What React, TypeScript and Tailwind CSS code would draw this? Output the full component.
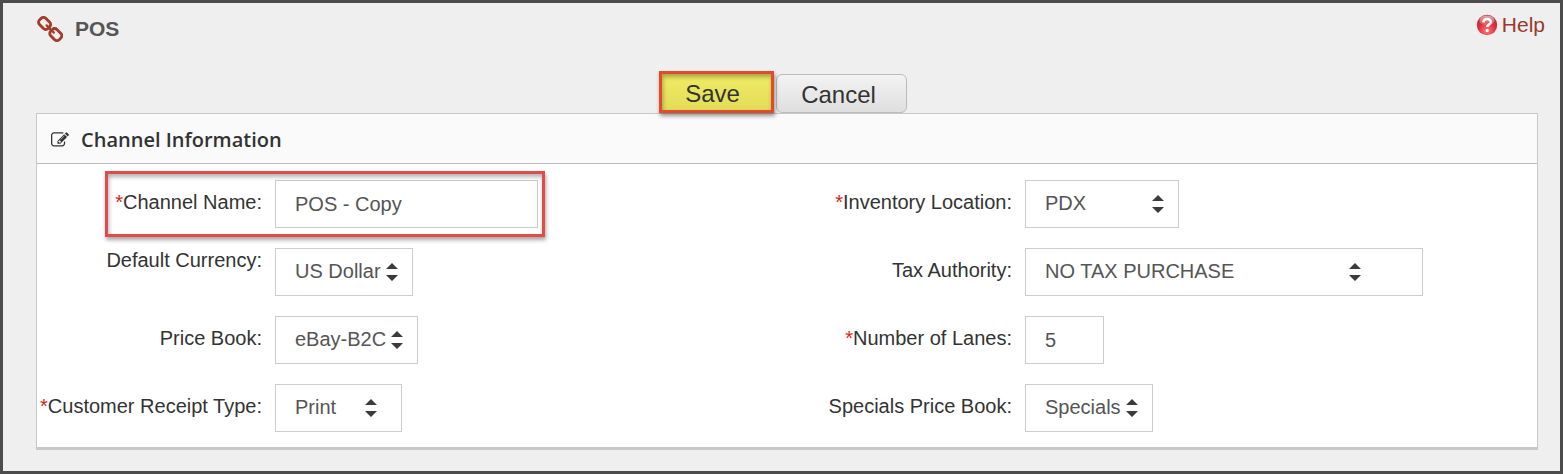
import type { ReactNode } from "react";

const ChainIcon = () => (
  <svg viewBox="0 0 26 26" className="size-[26px]" fill="none" stroke="#a63a2b" strokeWidth="2.9" aria-hidden="true">
    <rect x="-6" y="-4.4" width="12" height="8.8" rx="3.2" transform="translate(7.6 7.4) rotate(45)" />
    <rect x="-6" y="-4.4" width="12" height="8.8" rx="3.2" transform="translate(18.8 18.6) rotate(45)" />
    <path d="m9.6 9.4 7.2 7.2" strokeLinecap="round" strokeWidth="2.2" />
  </svg>
);

const HelpIcon = () => (
  <svg viewBox="0 0 22 22" className="size-[22px]" aria-hidden="true">
    <defs>
      <radialGradient id="ball" cx="0.5" cy="0.8" r="0.75">
        <stop offset="0" stopColor="#ff7b80" />
        <stop offset="0.55" stopColor="#e0303c" />
        <stop offset="1" stopColor="#b02a34" />
      </radialGradient>
      <linearGradient id="gloss" x1="0" y1="0" x2="0" y2="1">
        <stop offset="0" stopColor="#fff" stopOpacity="0.6" />
        <stop offset="1" stopColor="#fff" stopOpacity="0.1" />
      </linearGradient>
    </defs>
    <circle cx="11" cy="11" r="10.2" fill="url(#ball)" />
    <ellipse cx="11" cy="6.4" rx="7.6" ry="5" fill="url(#gloss)" />
    <path d="M7.4 8.4c.2-4.6 7.4-4.4 7.4-.4 0 2.6-3.6 2.4-3.6 5" fill="none" stroke="#fff" strokeWidth="2.6" />
    <circle cx="11.2" cy="16.4" r="1.6" fill="#fff" />
  </svg>
);

const EditIcon = () => (
  <svg viewBox="0 0 1792 1792" className="size-[18px]" fill="currentColor" aria-hidden="true">
    <path d="M888 1184l116-116-152-152-116 116v56h96v96h56zm440-720q-16-16-33 1l-350 350q-17 17-1 33t33-1l350-350q17-17 1-33zm80 594v190q0 119-84.5 203.5t-203.5 84.5h-832q-119 0-203.5-84.5t-84.5-203.5v-832q0-119 84.5-203.5t203.5-84.5h832q63 0 117 25 15 7 18 23 3 17-9 29l-49 49q-14 14-32 8-23-6-45-6h-832q-66 0-113 47t-47 113v832q0 66 47 113t113 47h832q66 0 113-47t47-113v-126q0-13 9-22l64-64q15-15 35-7t20 29zm-96-738l288 288-672 672h-288v-288zm444 132l-92 92-288-288 92-92q28-28 68-28t68 28l152 152q28 28 28 68t-28 68z" />
  </svg>
);

type FieldProps = {
  id: string;
  label: string;
  required?: boolean;
  labelClass?: string;
  children: ReactNode;
};

const Field = ({ id, label, required, labelClass = "self-center pb-1", children }: FieldProps) => (
  <div className="flex h-12 gap-[13px]">
    <label htmlFor={id} className={`w-[30%] whitespace-nowrap text-right leading-6 text-[#333] ${labelClass}`}>
      {required && <span className="text-[#e02020]">*</span>}
      {label}:
    </label>
    {children}
  </div>
);

type SelectProps = {
  id: string;
  value: string;
  width: string;
  arrow?: string;
};

const Select = ({ id, value, width, arrow = "right-[15px]" }: SelectProps) => (
  <div className={`relative h-12 ${width}`}>
    <select id={id} className="size-full appearance-none border border-[#ccc] bg-white pb-0.5 pl-[19px] text-[#555]">
      <option>{value}</option>
    </select>
    <svg viewBox="0 0 12 18" className={`pointer-events-none absolute top-[15px] h-[18px] w-3 ${arrow}`} fill="#3b3b3b" aria-hidden="true">
      <path d="M6 0l6 6H0zM6 18l6-6H0z" />
    </svg>
  </div>
);

const inputClass = "h-12 border border-[#ccc] bg-white pl-[19px] text-[#555]";

const App = () => {
  return (
    <div className="border-[3px] border-[#4d4c4d] bg-[#efefef] pb-[21px] pl-[33px] pr-[22px] font-['Liberation_Sans',Arial,sans-serif] text-xl">
      <header className="flex h-[68px] items-start justify-between">
        <h1 className="flex items-center gap-3 pl-px pt-3 text-[21px] font-bold leading-7 text-[#555]">
          <ChainIcon />
          POS
        </h1>
        <a href="#help" className="-mr-[7px] flex items-center gap-1 pt-2 text-[21px] leading-7 text-[#993a2b]">
          <HelpIcon />
          Help
        </a>
      </header>

      <form>
        <div className="flex items-end justify-center gap-0.5 pr-2">
          <button
            type="button"
            className="relative h-[42px] w-[115px] border-[3px] border-[#e24a2c] bg-linear-to-b from-[#f0ec64] to-[#e3dc58] pr-2 pt-1 text-2xl leading-8 text-[#333] shadow-[1px_3px_4px_rgba(0,0,0,0.4),inset_1px_3px_4px_rgba(0,0,0,0.3)]"
          >
            Save
          </button>
          <button
            type="button"
            className="h-[39px] w-[131px] rounded-md border border-[#bbb] bg-linear-to-b from-[#f3f3f3] to-[#dfdfdf] pr-1.5 pt-0.5 text-2xl leading-8 text-[#333]"
          >
            Cancel
          </button>
        </div>

        <section className="border border-b-[3px] border-[#c8c8c8] bg-white">
          <h2 className="flex h-[50px] items-center gap-3 border-b border-[#bbb] bg-[#fafafa] pl-3.5 pt-0.5 font-['Open_Sans',sans-serif] font-semibold text-[#333]">
            <EditIcon />
            Channel Information
          </h2>
          <div className="grid grid-cols-2 pb-[15px] pt-4">
            <div className="flex flex-col gap-5">
              <div className="relative">
                <Field id="name" label="Channel Name" required>
                  <input id="name" type="text" defaultValue="POS - Copy" className={`${inputClass} w-[263px]`} />
                </Field>
                <div className="pointer-events-none absolute -top-[9px] left-[9%] h-[66px] w-[440px] border-[3px] border-[#e24b4b] shadow-[1px_3px_4px_rgba(0,0,0,0.35),inset_1px_3px_4px_rgba(0,0,0,0.3)]" />
              </div>
              <Field id="currency" label="Default Currency" labelClass="self-start">
                <Select id="currency" value="US Dollar" width="w-[138px]" />
              </Field>
              <Field id="price-book" label="Price Book">
                <Select id="price-book" value="eBay-B2C" width="w-[143px]" />
              </Field>
              <Field id="receipt" label="Customer Receipt Type" required>
                <Select id="receipt" value="Print" width="w-[127px]" arrow="right-[25px]" />
              </Field>
            </div>
            <div className="flex flex-col gap-5">
              <Field id="location" label="Inventory Location" required>
                <Select id="location" value="PDX" width="w-[154px]" />
              </Field>
              <Field id="tax" label="Tax Authority">
                <Select id="tax" value="NO TAX PURCHASE" width="w-[398px]" arrow="right-[62px]" />
              </Field>
              <Field id="lanes" label="Number of Lanes" required>
                <input id="lanes" type="text" defaultValue="5" className={`${inputClass} w-[79px]`} />
              </Field>
              <Field id="specials" label="Specials Price Book">
                <Select id="specials" value="Specials" width="w-[128px]" />
              </Field>
            </div>
          </div>
        </section>
      </form>
    </div>
  );
};

export default App;
